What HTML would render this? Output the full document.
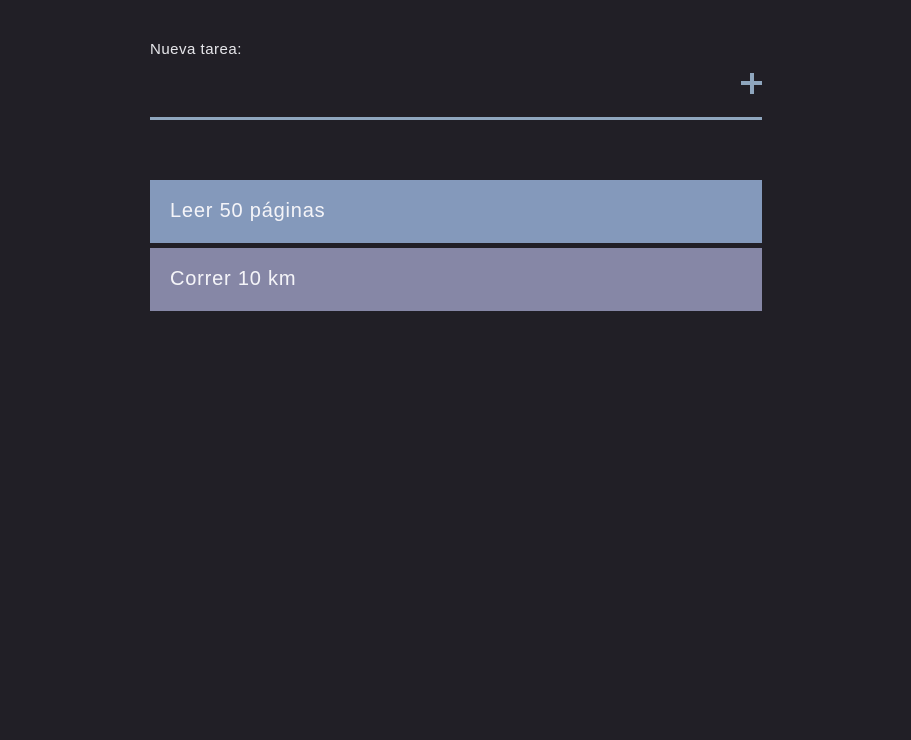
<!DOCTYPE html>
<html><head><style>
html,body{margin:0;padding:0;background:#211f26;width:911px;height:740px;overflow:hidden;font-family:"Liberation Sans",sans-serif;}
.label{position:absolute;left:150px;top:41px;font-size:15px;color:#e4e4e8;letter-spacing:0.5px;}
.line{position:absolute;left:150px;top:117px;width:612px;height:3px;background:#8fa6be;}
.plus{position:absolute;left:741px;top:73px;width:21px;height:21px;}
.plus:before{content:"";position:absolute;left:0;top:8px;width:21px;height:4px;background:#8fa6be;}
.plus:after{content:"";position:absolute;left:8.5px;top:0;width:4px;height:21px;background:#8fa6be;}
.item{position:absolute;left:150px;width:612px;height:63px;color:#f4f4f8;font-size:20px;letter-spacing:0.8px;line-height:63px;padding-left:20px;box-sizing:border-box;}
</style></head><body>
<div class="label">Nueva tarea:</div>
<div class="plus"></div>
<div class="line"></div>
<div class="item" style="top:180px;background:#8499bb;">Leer 50 páginas</div>
<div class="item" style="top:248px;background:#8687a6;">Correr 10 km</div>
</body></html>
